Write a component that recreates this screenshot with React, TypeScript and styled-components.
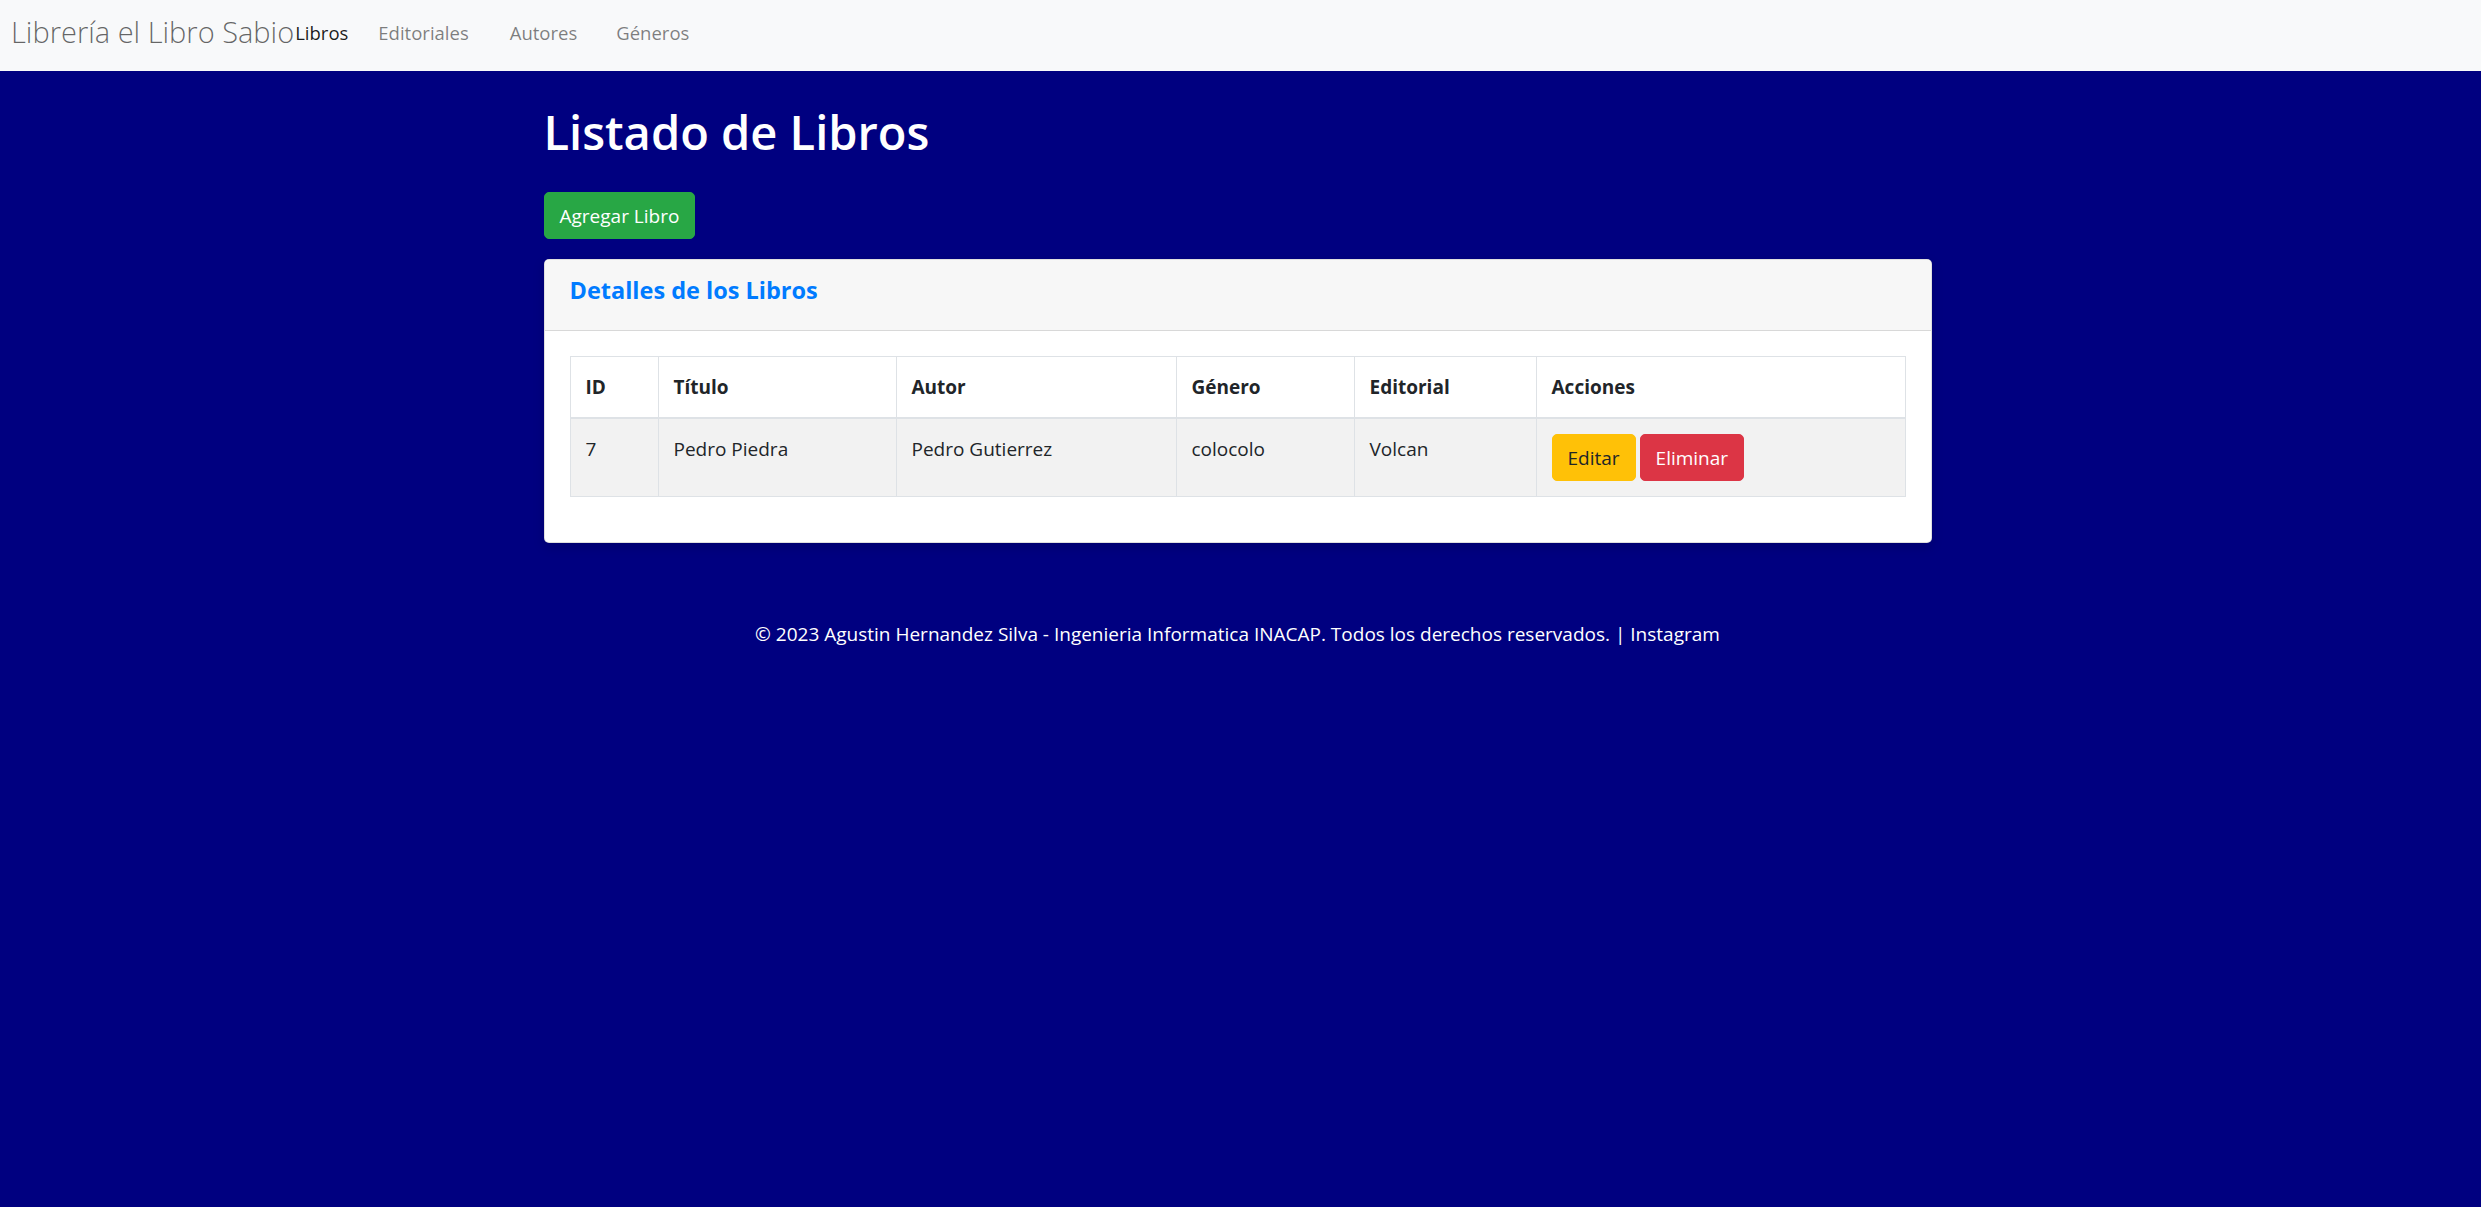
import React from "react";
import styled, { createGlobalStyle } from "styled-components";

const GlobalStyle = createGlobalStyle`
  html, body {
    margin: 0;
    padding: 0;
  }
  body {
    background: #000080;
    min-height: 100vh;
    font-family: "Segoe UI", "Open Sans", "Noto Sans", sans-serif;
    font-size: 19px;
    line-height: 30px;
    color: #212529;
  }
`;

const Navbar = styled.nav`
  display: flex;
  align-items: center;
  height: 71px;
  padding: 0 11px;
  background: #f8f9fa;
  box-sizing: border-box;
`;

const Brand = styled.a`
  font-size: 29px;
  font-weight: 300;
  line-height: 38px;
  color: rgba(0, 0, 0, 0.6);
  text-decoration: none;
  margin-top: -8px;
`;

const NavList = styled.div`
  display: flex;
  align-items: center;
  margin-top: -6px;
`;

const NavLink = styled.a<{ $active?: boolean; $gap: number }>`
  font-size: 18.5px;
  margin-left: ${(p) => p.$gap}px;
  color: ${(p) => (p.$active ? "rgba(0,0,0,0.9)" : "rgba(0,0,0,0.5)")};
  text-decoration: none;
`;

const Container = styled.main`
  width: 1388px;
  margin: 0 auto;
  padding-top: 31px;
  transform: translateX(-3px);
`;

const Title = styled.h1`
  margin: 0 0 30px;
  font-size: 47px;
  font-weight: 600;
  line-height: 60px;
  color: #fff;
`;

const Btn = styled.button<{ $variant: "success" | "warning" | "danger" }>`
  font-family: inherit;
  font-size: 19px;
  line-height: 30px;
  padding: 7.5px 15px;
  border-radius: 5px;
  border: 1px solid transparent;
  cursor: pointer;
  background: ${(p) =>
    p.$variant === "success" ? "#28a745" : p.$variant === "warning" ? "#ffc107" : "#dc3545"};
  border-color: ${(p) =>
    p.$variant === "success" ? "#28a745" : p.$variant === "warning" ? "#ffc107" : "#dc3545"};
  color: ${(p) => (p.$variant === "warning" ? "#212529" : "#fff")};
`;

const AddRow = styled.div`
  margin-bottom: 20px;
`;

const Card = styled.section`
  background: #fff;
  border: 1px solid rgba(0, 0, 0, 0.125);
  border-radius: 5px;
  box-shadow: 0 4px 12px rgba(0, 0, 0, 0.15);
  overflow: hidden;
`;

const CardHeader = styled.div`
  padding: 15px 25px;
  background: #f7f7f7;
  border-bottom: 1px solid rgba(0, 0, 0, 0.125);
`;

const CardTitle = styled.h5`
  margin: 0 0 10px;
  font-size: 23.5px;
  font-weight: 700;
  line-height: 30px;
  color: #007bff;
`;

const CardBody = styled.div`
  padding: 25px;
`;

const Table = styled.table`
  width: 100%;
  border-collapse: collapse;
  table-layout: fixed;
  margin-bottom: 20px;
`;

const Th = styled.th<{ $w?: number }>`
  box-sizing: border-box;
  width: ${(p) => (p.$w ? `${p.$w}px` : "auto")};
  text-align: left;
  font-weight: 700;
  padding: 15px;
  border: 1px solid #dee2e6;
  border-bottom: 2px solid #dee2e6;
  vertical-align: bottom;
`;

const Tr = styled.tr<{ $striped?: boolean }>`
  background: ${(p) => (p.$striped ? "#f2f2f2" : "#fff")};
`;

const Td = styled.td`
  padding: 15px;
  border: 1px solid #dee2e6;
  vertical-align: top;
`;

const Actions = styled.div`
  display: flex;
  gap: 4px;
`;

const Footer = styled.footer`
  margin-top: 76px;
  text-align: center;
  color: #fff;
  font-size: 19px;
`;

const FooterLink = styled.a`
  color: #fff;
  text-decoration: none;
`;

const books = [
  { id: 7, titulo: "Pedro Piedra", autor: "Pedro Gutierrez", genero: "colocolo", editorial: "Volcan" },
];

export default function App() {
  return (
    <>
      <GlobalStyle />
      <Navbar>
        <Brand href="#">Librería el Libro Sabio</Brand>
        <NavList>
          <NavLink href="#" $active $gap={1}>
            Libros
          </NavLink>
          <NavLink href="#" $gap={30}>
            Editoriales
          </NavLink>
          <NavLink href="#" $gap={41}>
            Autores
          </NavLink>
          <NavLink href="#" $gap={39}>
            Géneros
          </NavLink>
        </NavList>
      </Navbar>
      <Container>
        <Title>Listado de Libros</Title>
        <AddRow>
          <Btn $variant="success">Agregar Libro</Btn>
        </AddRow>
        <Card>
          <CardHeader>
            <CardTitle>Detalles de los Libros</CardTitle>
          </CardHeader>
          <CardBody>
            <Table>
              <thead>
                <tr>
                  <Th $w={88}>ID</Th>
                  <Th $w={238}>Título</Th>
                  <Th $w={280}>Autor</Th>
                  <Th $w={178}>Género</Th>
                  <Th $w={182}>Editorial</Th>
                  <Th>Acciones</Th>
                </tr>
              </thead>
              <tbody>
                {books.map((b, i) => (
                  <Tr key={b.id} $striped={i % 2 === 0}>
                    <Td>{b.id}</Td>
                    <Td>{b.titulo}</Td>
                    <Td>{b.autor}</Td>
                    <Td>{b.genero}</Td>
                    <Td>{b.editorial}</Td>
                    <Td>
                      <Actions>
                        <Btn $variant="warning">Editar</Btn>
                        <Btn $variant="danger">Eliminar</Btn>
                      </Actions>
                    </Td>
                  </Tr>
                ))}
              </tbody>
            </Table>
          </CardBody>
        </Card>
        <Footer>
          © 2023 Agustin Hernandez Silva - Ingenieria Informatica INACAP. Todos los derechos reservados. |{" "}
          <FooterLink href="#">Instagram</FooterLink>
        </Footer>
      </Container>
    </>
  );
}
